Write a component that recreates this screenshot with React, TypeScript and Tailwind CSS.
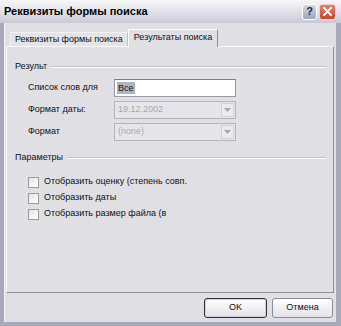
import React from "react";

function Combo({ value }: { value: string }) {
  return (
    <div className="w-[122px] h-[18px] flex border border-[#b4b4be] bg-[#e6e6ea]">
      <div className="flex-1 flex items-center pl-[3px] text-[#a6a6ae]">{value}</div>
      <div className="w-[13px] m-[1px] flex items-center justify-center bg-[#ececf0] border border-[#d0d0d8]">
        <svg width="7" height="4" viewBox="0 0 7 4">
          <path d="M0 0 L7 0 L3.5 4 Z" fill="#a8a8b0" />
        </svg>
      </div>
    </div>
  );
}

function Check({ label }: { label: string }) {
  return (
    <div className="h-[16px] flex items-center">
      <div className="w-[11px] h-[11px] border border-[#9a9aa4] bg-gradient-to-br from-[#e4e4e8] to-[#ffffff]" />
      <span className="ml-[5px] whitespace-nowrap">{label}</span>
    </div>
  );
}

function GroupLabel({ text }: { text: string }) {
  return (
    <div className="h-[12px] flex items-center pl-[8px] pr-[7px]">
      <span className="whitespace-nowrap">{text}</span>
      <div className="flex-1 ml-[4px] border-t border-[#c4c4cc] border-b border-b-white" />
    </div>
  );
}

export default function App() {
  return (
    <div className="w-[341px] h-[326px] flex flex-col bg-[#a9a9bc] font-['Liberation_Sans',Arial,sans-serif] text-[9px] text-[#111] overflow-hidden">
      {/* title bar */}
      <div className="h-[23px] flex items-center pl-[4px] pr-[5px] bg-gradient-to-b from-[#f6f6f9] via-[#e2e2ea] to-[#c9c9d5]">
        <span className="flex-1 font-bold text-[11px] text-black whitespace-nowrap">Реквизиты формы поиска</span>
        <div className="flex gap-[2px] items-center">
          <div className="w-[15px] h-[16px] rounded-[3px] border border-[#ffffff] bg-gradient-to-b from-[#d6d8e6] to-[#9fa3bb] flex items-center justify-center text-[#22264a] font-bold text-[11px]">
            ?
          </div>
          <div className="w-[17px] h-[16px] rounded-[3px] border border-[#f4d0c8] bg-gradient-to-b from-[#e8806a] to-[#c8462a] flex items-center justify-center">
            <svg width="9" height="9" viewBox="0 0 9 9">
              <path d="M1 1 L8 8 M8 1 L1 8" stroke="white" strokeWidth="1.8" strokeLinecap="round" />
            </svg>
          </div>
        </div>
      </div>
      {/* body */}
      <div className="flex-1 flex flex-col ml-[4px] mr-[5px] mb-[4px] bg-[#e0dfe3] border-l border-l-[#f4f4f6]">
        {/* tabs */}
        <div className="h-[23px] flex items-end ml-[2px] pl-[3px]">
          <div className="h-[14px] flex items-center px-[4px] border-t border-l border-[#f2f2f4] border-r border-r-[#c0c0c8] bg-[#e4e3e7] whitespace-nowrap">
            Реквизиты формы поиска
          </div>
          <div className="relative z-10 -mb-[1px] h-[18px] flex items-start pt-[1px] px-[5px] border-t border-l border-[#fafafc] border-r border-r-[#8e8e9a] bg-[#e0dfe3] whitespace-nowrap">
            Результаты поиска
          </div>
        </div>
        {/* panel */}
        <div className="h-[247px] ml-[1px] mr-[2px] border-t border-l border-[#f8f8fa] border-r border-r-[#8e8e9a] border-b border-b-[#8e8e9a] bg-[#e0dfe3] flex flex-col pt-[14px]">
          <GroupLabel text="Результ" />
          <div className="mt-[6px] ml-[21px] flex flex-col gap-[4px]">
            <div className="h-[18px] flex items-center">
              <span className="w-[86px] whitespace-nowrap">Список слов для</span>
              <div className="w-[122px] h-[18px] border border-[#9898a6] border-t-[#7c7c88] bg-white flex items-center pl-[2px]">
                <span className="bg-[#b2b4bf] px-[1px] leading-[12px]">Все</span>
              </div>
            </div>
            <div className="h-[18px] flex items-center">
              <span className="w-[86px] whitespace-nowrap">Формат даты:</span>
              <Combo value="19.12.2002" />
            </div>
            <div className="h-[18px] flex items-center">
              <span className="w-[86px] whitespace-nowrap">Формат</span>
              <Combo value="(none)" />
            </div>
          </div>
          <div className="mt-[11px]">
            <GroupLabel text="Параметры" />
          </div>
          <div className="mt-[10px] ml-[21px] flex flex-col">
            <Check label="Отобразить оценку (степень совп." />
            <Check label="Отобразить даты" />
            <Check label="Отобразить размер файла (в" />
          </div>
        </div>
        {/* buttons */}
        <div className="flex justify-end gap-[5px] pt-[5px] pr-[3px]">
          <div className="w-[63px] h-[20px] rounded-[3px] border border-[#303038] bg-gradient-to-b from-[#ffffff] to-[#e2e2e8] flex items-center justify-center shadow-[inset_0_0_0_1px_#d0d0dc]">
            OK
          </div>
          <div className="w-[61px] h-[20px] rounded-[3px] border border-[#8c8c98] bg-gradient-to-b from-[#ffffff] to-[#e2e2e8] flex items-center justify-center">
            Отмена
          </div>
        </div>
      </div>
    </div>
  );
}
